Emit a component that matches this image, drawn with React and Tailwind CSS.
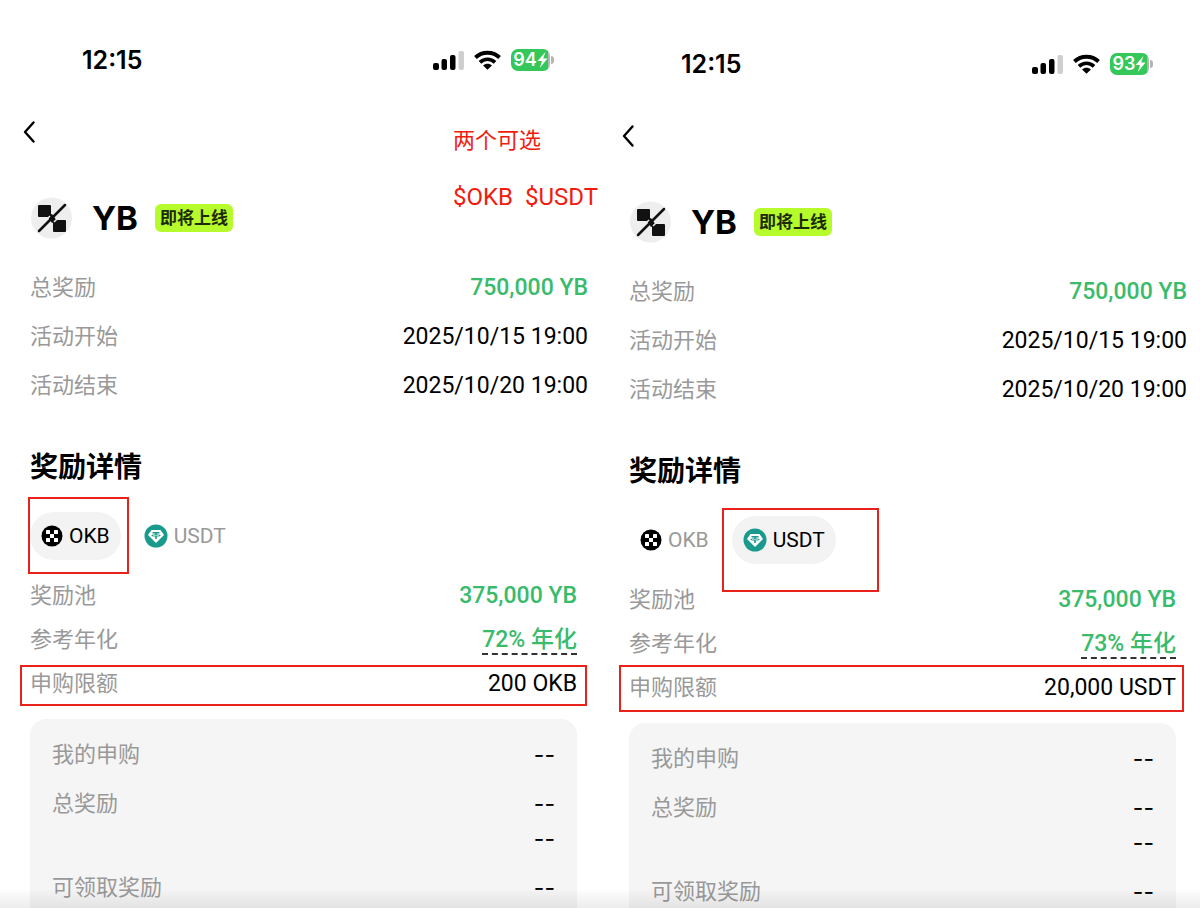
import React, { useState } from "react";

const FONT = "font-[Roboto,'Noto_Sans_CJK_SC',sans-serif]";

const SignalIcon = () => (
  <svg width="31" height="20" viewBox="0 0 31 20" aria-hidden="true">
    <rect x="0" y="13" width="6" height="7" rx="2" />
    <rect x="8.5" y="9" width="5.5" height="11" rx="2" />
    <rect x="17" y="5" width="5.5" height="15" rx="2" />
    <rect x="25.5" y="1" width="5.5" height="19" rx="2" fill="#cfcfcf" />
  </svg>
);

const WifiIcon = () => (
  <svg width="27" height="20" viewBox="0 0 28 20" fill="none" stroke="#000" aria-hidden="true">
    <path d="M1.5 7.4C8.4 0.8 19.6 0.8 26.5 7.4" strokeWidth="4" />
    <path d="M6.2 12.4C10.6 8.2 17.4 8.2 21.8 12.4" strokeWidth="3.8" />
    <path d="M14 20L9.4 15.8C11.8 13.4 16.2 13.4 18.6 15.800Z" fill="#000" stroke="none" />
  </svg>
);

const Battery = ({ level }) => (
  <div className="flex items-center gap-px">
    <div className="flex h-[22px] w-[39px] items-center justify-center rounded-[7px] bg-linear-to-r from-[#34c759] from-94% to-[#b5b5b5] to-94% text-white">
      <span className="font-[Inter,sans-serif] text-lg font-semibold">{level}</span>
      <svg width="11" height="16" viewBox="0 0 11 16" fill="currentColor" aria-hidden="true">
        <path d="M8.5 0L0.5 9H5L2.8 16L10.5 6.6H6.2Z" />
      </svg>
    </div>
    <div className="h-2 w-[3px] rounded-r-full bg-[#b5b5b5]" />
  </div>
);

const YbLogo = () => (
  <svg width="42" height="42" viewBox="0 0 42 42" aria-hidden="true">
    <circle cx="21.5" cy="21" r="20.5" fill="#eeeeee" />
    <rect x="8" y="8" width="13" height="12" rx="1" fill="#111" />
    <rect x="23" y="23" width="13" height="12" rx="1" fill="#111" />
    <path d="M17 19L22 17L27 24L22 26Z" fill="#111" />
    <path d="M7 32L20 19M24 25L37 12" stroke="#eeeeee" strokeWidth="1.5" />
    <path d="M9 34L35 8" stroke="#111" strokeWidth="2.5" strokeLinecap="round" />
  </svg>
);

const OkbIcon = () => (
  <svg width="22" height="22" viewBox="0 0 22 22" aria-hidden="true">
    <circle cx="11" cy="11" r="10.5" />
    <g fill="#fff">
      <rect x="5" y="5" width="4" height="4" rx="0.5" />
      <rect x="13" y="5" width="4" height="4" rx="0.5" />
      <rect x="9" y="9" width="4" height="4" rx="0.5" />
      <rect x="5" y="13" width="4" height="4" rx="0.5" />
      <rect x="13" y="13" width="4" height="4" rx="0.5" />
    </g>
  </svg>
);

const UsdtIcon = () => (
  <svg width="24" height="24" viewBox="0 0 24 24" aria-hidden="true">
    <circle cx="12" cy="12" r="11.5" fill="#1a9a8c" />
    <path d="M7.5 6H16.5L20 11L12 19L4 11Z" fill="#fff" />
    <path d="M8.5 8H15.5V9.4H12.8V10.2C15.2 10.4 16.5 10.8 16.5 11.4C16.5 12 15.2 12.4 12.8 12.6V15H11.2V12.6C8.8 12.4 7.5 12 7.5 11.4C7.5 10.8 8.8 10.4 11.2 10.2V9.4H8.5Z" fill="#1a9a8c" />
    <path d="M9 11.4H15" stroke="#fff" strokeWidth="0.6" />
  </svg>
);

const tokens = [
  { name: "OKB", Icon: OkbIcon },
  { name: "USDT", Icon: UsdtIcon },
];

// red marker drawn over the page
const Mark = ({ className }) => (
  <span className={`pointer-events-none absolute border-2 border-[#e8221a] ${className}`} />
);

const InfoRow = ({ label, children, className = "" }) => (
  <div className={`flex items-center justify-between ${className}`}>
    <dt className="text-[22px] text-[#999]">{label}</dt>
    <dd>{children}</dd>
  </div>
);

const Phone = ({ battery, token, apr, limit, offset = "", tabMark, limitMark, note }) => {
  const [selected, setSelected] = useState(token);

  return (
    <section className={`relative flex flex-col pl-[30px] ${offset}`}>
      <div className="flex h-10 items-center justify-between pr-[46px] pl-[52px]">
        <span className="font-[Inter,sans-serif] text-[25px] font-semibold">12:15</span>
        <div className="flex items-center gap-2.5">
          <SignalIcon />
          <WifiIcon />
          <Battery level={battery} />
        </div>
      </div>

      <button type="button" aria-label="返回" className="mt-8 -ml-2 flex h-10 w-6 items-center">
        <svg width="14" height="24" viewBox="0 0 14 24" fill="none" stroke="#000" strokeWidth="2.4" strokeLinecap="round" strokeLinejoin="round">
          <path d="M11.5 2.5L3 12L11.5 21.5" />
        </svg>
      </button>
      {note && (
        <div className="absolute top-[113px] left-[453px] whitespace-pre leading-[56px] text-[#f01c10]">
          <p className="text-[22px] leading-[56px]">两个可选</p>
          <p className="text-2xl leading-[56px]">$OKB  $USDT</p>
        </div>
      )}

      <div className="mt-[42px] flex h-12 items-center">
        <YbLogo />
        <h1 className="ml-5 font-[Inter,sans-serif] text-[33px] font-bold">YB</h1>
        <span className="ml-[17px] flex h-7 items-center rounded-md bg-[#b6fc2d] px-[5px] text-[17px] font-bold text-[#1c2a08]">即将上线</span>
      </div>

      <dl className="mt-[21px] pr-3">
        <InfoRow label="总奖励" className="h-[49px]"><span className="font-medium text-[#3abb6c]">750,000 YB</span></InfoRow>
        <InfoRow label="活动开始" className="h-[49px]">2025/10/15 19:00</InfoRow>
        <InfoRow label="活动结束" className="h-[49px]">2025/10/20 19:00</InfoRow>
      </dl>

      <h2 className="mt-[38px] text-[28px] leading-10 font-bold">奖励详情</h2>

      <div className="mt-6 flex gap-3">
        {tokens.map(({ name, Icon }) => (
          <button
            key={name}
            type="button"
            aria-pressed={selected === name}
            onClick={() => setSelected(name)}
            className={`relative flex h-12 items-center gap-1.5 rounded-full px-[11px] text-[21px] ${selected === name ? "bg-[#f3f3f3] text-black" : "text-[#999]"}`}
          >
            <Icon />
            {name}
            {token === name && <Mark className={tabMark} />}
          </button>
        ))}
      </div>

      <dl className="mt-3.5 pr-[23px]">
        <InfoRow label="奖励池" className="h-11"><span className="font-medium text-[#3abb6c]">375,000 YB</span></InfoRow>
        <InfoRow label="参考年化" className="h-11">
          <span className="border-b-2 border-dashed border-[#333] font-medium text-[#3abb6c]">{apr}</span>
        </InfoRow>
        <div className="relative">
          <InfoRow label="申购限额" className="h-11">{limit}</InfoRow>
          <Mark className={limitMark} />
        </div>
      </dl>

      <dl className="mt-[13px] mr-[23px] grow rounded-t-2xl bg-[#f5f5f5] px-[22px] pt-[11px] [&_dd]:font-[Inter,sans-serif]">
        <InfoRow label="我的申购" className="h-[49px]">--</InfoRow>
        <InfoRow label="总奖励" className="h-[49px]">--</InfoRow>
        <dd className="text-right leading-[22px]">--</dd>
        <InfoRow label="可领取奖励" className="mt-[13px] h-[49px]">--</InfoRow>
      </dl>
    </section>
  );
};

const App = () => {
  return (
    <main className={`relative grid min-h-screen grid-cols-2 overflow-hidden bg-white text-[23px] leading-8 text-black ${FONT}`}>
      <Phone
        battery={94}
        token="OKB"
        apr="72% 年化"
        limit="200 OKB"
        offset="pt-10"
        tabMark="-top-[15px] -left-0.5 h-[77px] w-[101px]"
        limitMark="top-[3px] -right-2.5 bottom-0 -left-2.5"
        note
      />
      <Phone
        battery={93}
        token="USDT"
        apr="73% 年化"
        limit="20,000 USDT"
        offset="-ml-px mr-px pt-11"
        tabMark="-top-2 -left-2.5 h-[84px] w-[157px]"
        limitMark="-top-px -right-2 -bottom-0.5 -left-2.5"
      />
      <div className="pointer-events-none absolute inset-x-0 bottom-0 h-7 border-b border-white bg-linear-to-b from-transparent to-black/10" />
    </main>
  );
};

export default App;
